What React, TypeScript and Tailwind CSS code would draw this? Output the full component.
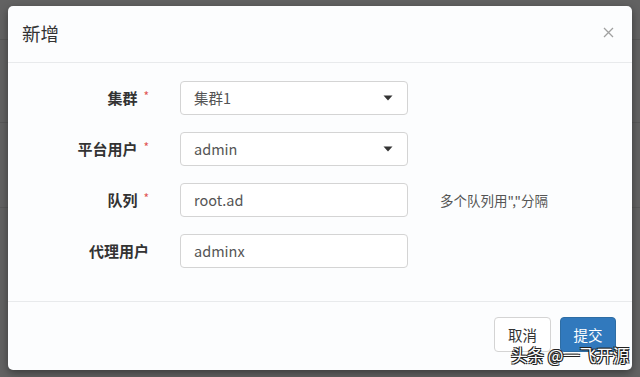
import React from "react";

const font = { fontFamily: '"Noto Sans CJK SC", "Noto Sans", "Liberation Sans", sans-serif' };

function Caret() {
  return (
    <svg width="10" height="6" viewBox="0 0 10 6" className="shrink-0">
      <path d="M0.5 0.5 L9.5 0.5 L5 5.5 Z" fill="#333" />
    </svg>
  );
}

function Row({ label, required, children, help }: { label: string; required?: boolean; children: React.ReactNode; help?: string }) {
  return (
    <div className="flex items-center h-[34px]">
      <div className="w-[172px] flex justify-end pr-[31px] text-[15px] font-bold text-[#333]">
        <span>{label}</span>
        {required ? <span className="text-[#e05555] font-normal ml-[6px] text-[12px] leading-[18px]">*</span> : null}
      </div>
      <div className="w-[228px] h-[34px] border border-[#d4d4d4] rounded-[4px] bg-white flex items-center justify-between pl-[13px] pr-[14px] text-[14.5px] text-[#555]">
        {children}
      </div>
      {help ? <div className="ml-[32px] text-[13.5px] text-[#555]">{help}</div> : null}
    </div>
  );
}

export default function App() {
  return (
    <div className="w-[640px] h-[377px] bg-[#626262] relative overflow-hidden" style={font}>
      <div className="absolute left-0 right-0 top-[39px] h-px bg-[#585858]" />
      <div className="absolute left-0 right-0 top-[122px] h-px bg-[#585858]" />
      <div className="absolute left-0 right-0 top-[207px] h-px bg-[#595959]" />
      <div className="absolute left-[8px] top-[6px] w-[624px] h-[364px] bg-[#fcfdfe] rounded-[5px] shadow-[0_3px_9px_rgba(0,0,0,0.4)] flex flex-col">
        <div className="h-[57px] border-b border-[#e8eaec] flex items-center justify-between pl-[14px] pr-[17px]">
          <div className="text-[18.5px] text-[#333] mt-[-1px]">新增</div>
          <svg width="11" height="11" viewBox="0 0 11 11" className="mr-[1px] mt-[-4px]">
            <path d="M1 1 L10 10 M10 1 L1 10" stroke="#a0a0a0" strokeWidth="1.3" />
          </svg>
        </div>
        <div className="flex flex-col gap-[17px] pt-[18px] h-[239px] border-b border-[#e8eaec]">
          <Row label="集群" required>
            <span>集群1</span>
            <Caret />
          </Row>
          <Row label="平台用户" required>
            <span>admin</span>
            <Caret />
          </Row>
          <Row label="队列" required help={'多个队列用","分隔'}>
            <span>root.ad</span>
          </Row>
          <Row label="代理用户">
            <span>adminx</span>
          </Row>
        </div>
        <div className="flex justify-end gap-[9px] pr-[16px] pt-[15px]">
          <div className="w-[57px] h-[35px] border border-[#d4d4d4] rounded-[4px] bg-white flex items-center justify-center text-[14.5px] text-[#333]">取消</div>
          <div className="w-[56px] h-[35px] rounded-[4px] bg-[#3179bd] border border-[#2e6da4] flex items-center justify-center text-[14.5px] text-white">提交</div>
        </div>
      </div>
      <div
        className="absolute left-[511px] top-[347px] text-[16.5px] text-white leading-none"
        style={{ textShadow: "1px 1px 0 #222, -1px -1px 0 #222, 1px -1px 0 #222, -1px 1px 0 #222" }}
      >
        头条 @一飞开源
      </div>
    </div>
  );
}
